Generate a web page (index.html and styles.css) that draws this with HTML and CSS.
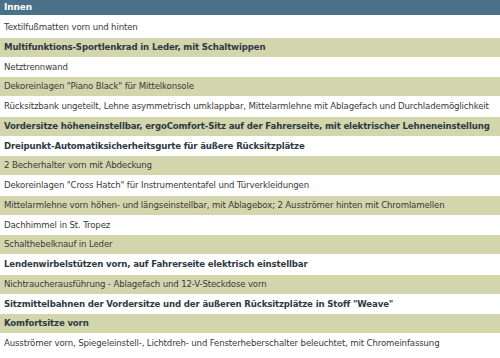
FILE: index.html
```html
<!DOCTYPE html>
<html lang="de">
<head>
<meta charset="utf-8">
<link rel="stylesheet" href="styles.css">
</head>
<body>
<div class="table">
  <div class="head">Innen</div>
  <div class="rows">
    <div class="row">Textilfußmatten vorn und hinten</div>
    <div class="row alt bold">Multifunktions-Sportlenkrad in Leder, mit Schaltwippen</div>
    <div class="row">Netztrennwand</div>
    <div class="row alt">Dekoreinlagen "Piano Black" für Mittelkonsole</div>
    <div class="row">Rücksitzbank ungeteilt, Lehne asymmetrisch umklappbar, Mittelarmlehne mit Ablagefach und Durchlademöglichkeit</div>
    <div class="row alt bold">Vordersitze höheneinstellbar, ergoComfort-Sitz auf der Fahrerseite, mit elektrischer Lehneneinstellung</div>
    <div class="row bold">Dreipunkt-Automatiksicherheitsgurte für äußere Rücksitzplätze</div>
    <div class="row alt">2 Becherhalter vorn mit Abdeckung</div>
    <div class="row">Dekoreinlagen "Cross Hatch" für Instrumententafel und Türverkleidungen</div>
    <div class="row alt">Mittelarmlehne vorn höhen- und längseinstellbar, mit Ablagebox; 2 Ausströmer hinten mit Chromlamellen</div>
    <div class="row">Dachhimmel in St. Tropez</div>
    <div class="row alt">Schalthebelknauf in Leder</div>
    <div class="row bold">Lendenwirbelstützen vorn, auf Fahrerseite elektrisch einstellbar</div>
    <div class="row alt">Nichtraucherausführung - Ablagefach und 12-V-Steckdose vorn</div>
    <div class="row bold">Sitzmittelbahnen der Vordersitze und der äußeren Rücksitzplätze in Stoff "Weave"</div>
    <div class="row alt bold">Komfortsitze vorn</div>
    <div class="row">Ausströmer vorn, Spiegeleinstell-, Lichtdreh- und Fensterheberschalter beleuchtet, mit Chromeinfassung</div>
  </div>
</div>
</body>
</html>
```
FILE: styles.css
```css
html, body {
  margin: 0;
  padding: 0;
  background: #ffffff;
}
.table {
  width: 500px;
  font-family: "DejaVu Sans", Verdana, sans-serif;
  font-size: 8.6px;
  letter-spacing: -0.15px;
  color: #3a3a3a;
}
.head {
  height: 15px;
  line-height: 15px;
  background: #4b7189;
  color: #ffffff;
  font-weight: bold;
  font-size: 9px;
  padding-left: 4px;
}
.rows {
  display: flex;
  flex-direction: column;
  gap: 1px;
  padding-top: 3px;
}
.row {
  height: 18.76px;
  line-height: 18.2px;
  padding-left: 4px;
  white-space: nowrap;
}
.alt {
  background: #d3d5ad;
}
.bold {
  font-weight: bold;
  color: #2e3a42;
}
```
